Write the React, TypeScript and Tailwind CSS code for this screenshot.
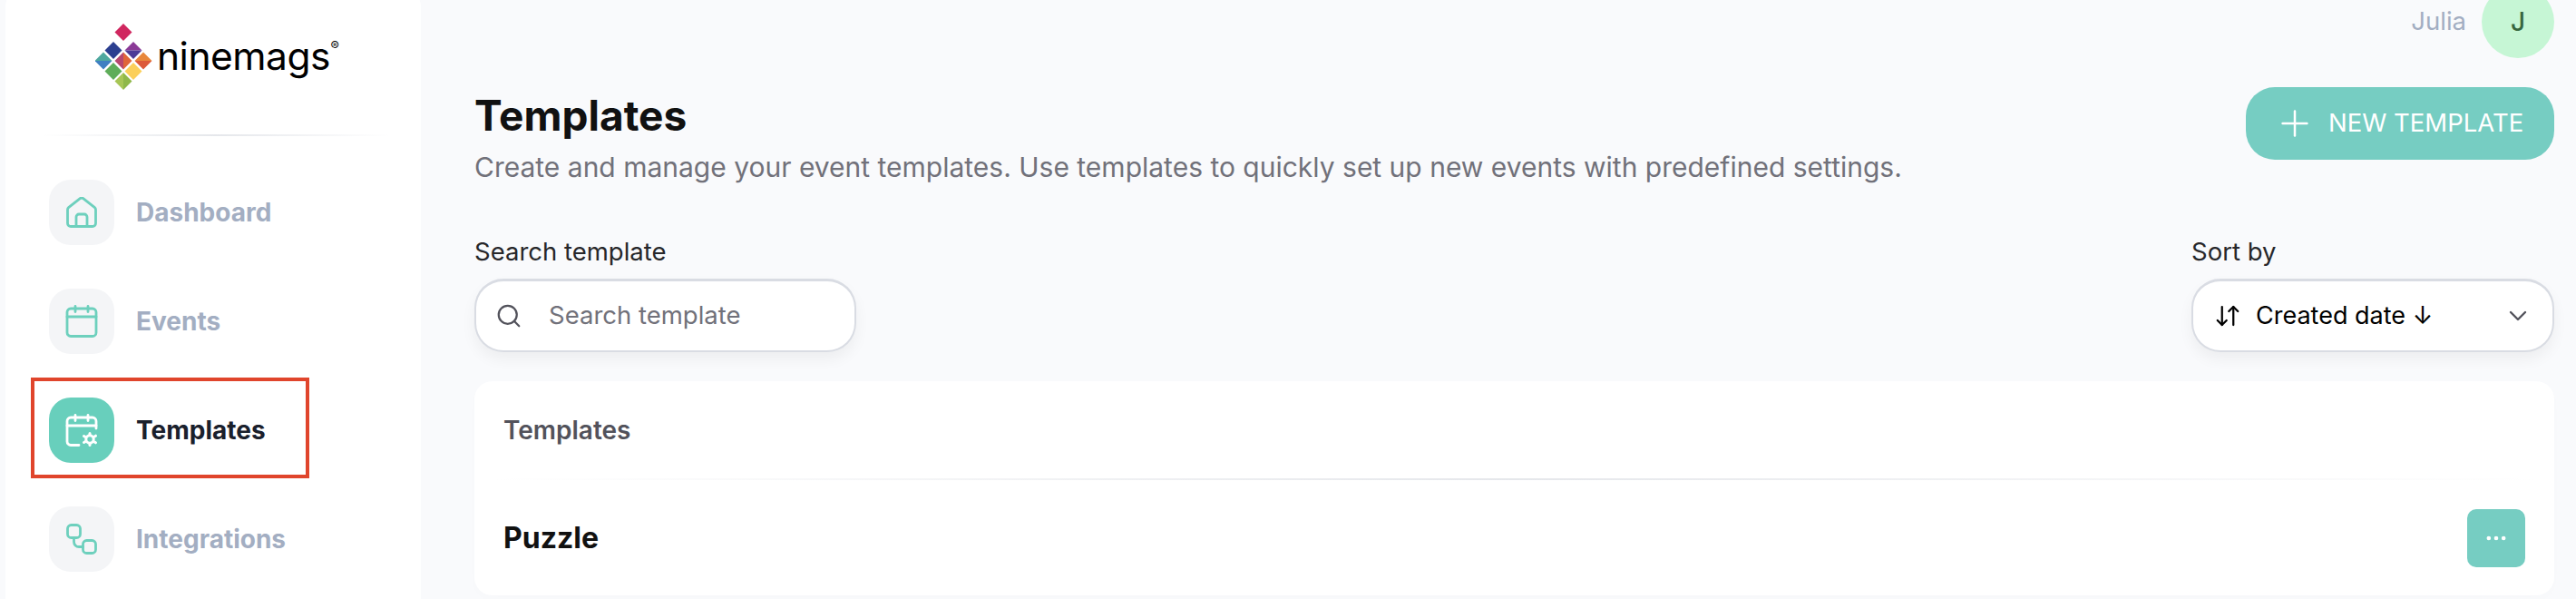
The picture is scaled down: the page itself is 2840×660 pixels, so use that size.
import { ArrowDownUp, ChevronDown, Ellipsis, Plus, Search } from "lucide-react";

const Logo = () => (
  <div className="flex items-start">
    <svg width="70" height="74" viewBox="0 0 70 74" className="shrink-0">
      {/* top */}
      <path d="M31 0l9.5 9.5L31 19l-9.5-9.5z" fill="#d0275f" />
      {/* upper pair */}
      <path d="M20 20l9.5 9.5L20 39l-9.5-9.5z" fill="#2c3f90" />
      <path d="M42 20l9.5 9.5H32.500z" fill="#8b3a97" />
      <path d="M51.500 29.500L42 39l-9.500-9.500z" fill="#4b3c98" />
      {/* middle row */}
      <path d="M9 31.500l9.500 9.500H-0.500z" fill="#4fa89f" />
      <path d="M18.500 41L9 50.500-0.500 41z" fill="#3f80c2" />
      <path d="M31 31.500V50.500L21.500 41z" fill="#b8476f" />
      <path d="M31 31.500L40.500 41 31 50.500z" fill="#e0663a" />
      <path d="M53 31.500l9.500 9.500H43.500z" fill="#e8873b" />
      <path d="M62.500 41L53 50.500 43.500 41z" fill="#dc5a3a" />
      {/* lower pair */}
      <path d="M20 43l9.500 9.500L20 62l-9.500-9.500z" fill="#5fad5a" />
      <path d="M42 43l9.500 9.500L42 62l-9.500-9.500z" fill="#fbcf5a" />
      {/* bottom */}
      <path d="M31 54v19l-9.500-9.500z" fill="#a7c656" />
      <path d="M31 54l9.500 9.500L31 73z" fill="#8fb84a" />
    </svg>
    <div className="relative -ml-[2px] mt-[9px] text-[42.5px] leading-[54px] tracking-[-0.5px] text-black [font-family:Inter,sans-serif]">
      ninemags
      <span className="absolute -right-[10px] top-[9px] text-[14px] leading-[14px] tracking-normal">®</span>
    </div>
  </div>
);

const HomeIcon = () => (
  <svg width="34" height="34" viewBox="0 0 34 34" fill="none" stroke="currentColor" strokeWidth="2.8" strokeLinejoin="round" strokeLinecap="round">
    <path d="M1.500 14a3 3 0 0 1 1.100-2.300L15 1.900a3.200 3.200 0 0 1 4 0l12.400 9.800a3 3 0 0 1 1.100 2.300V29a3.500 3.500 0 0 1-3.500 3.500H5A3.500 3.500 0 0 1 1.500 29z" />
    <path d="M11 32.500V22a3 3 0 0 1 3-3h6a3 3 0 0 1 3 3v10.500" />
  </svg>
);

const CalendarIcon = () => (
  <svg width="36" height="36" viewBox="0 0 36 36" fill="none" stroke="currentColor" strokeWidth="2.8" strokeLinecap="round">
    <rect x="2" y="4" width="32" height="30.500" rx="4" />
    <path d="M2 13h32M11 1.500v6M25 1.500v6" />
  </svg>
);

const CalendarCogIcon = () => (
  <svg width="36" height="36" viewBox="0 0 36 36" fill="none" stroke="currentColor" strokeWidth="2.8" strokeLinecap="round" className="overflow-visible">
    <path d="M15 34.500H6a4 4 0 0 1-4-4V8a4 4 0 0 1 4-4h24a4 4 0 0 1 4 4v8" />
    <path d="M2 13h32M11 1.500v6M25 1.500v6" />
    <circle cx="27" cy="28" r="4.200" strokeWidth="3" />
    <path d="M27 21.500v1.500M27 33v1.500M20.500 24.500l1.300.8M32.200 31l1.300.8M20.500 31.500l1.300-.8M32.200 25l1.300-.8" strokeWidth="3" />
  </svg>
);

const FlowIcon = () => (
  <svg width="34" height="34" viewBox="0 0 34 34" fill="none" stroke="currentColor" strokeWidth="2.8" strokeLinecap="round">
    <rect x="1.500" y="1.500" width="14" height="14" rx="4" />
    <rect x="18.500" y="18.500" width="14" height="14" rx="4" />
    <path d="M8.500 15.500V20a5.500 5.500 0 0 0 5.500 5.500h4.500" />
  </svg>
);

const navItems = [
  { label: "Dashboard", icon: <HomeIcon /> },
  { label: "Events", icon: <CalendarIcon /> },
  { label: "Templates", icon: <CalendarCogIcon />, active: true },
  { label: "Integrations", icon: <FlowIcon /> },
];

const Sidebar = () => (
  <aside className="-mt-4 ml-1.5 h-[700px] w-[458px] shrink-0 rounded-3xl bg-white">
    <div className="pl-[99px] pt-[42px]">
      <Logo />
    </div>
    <div className="ml-[39px] mt-[48px] h-[2px] w-[385px] bg-gradient-to-r from-transparent via-[#e5e7eb] to-transparent" />
    <nav className="mt-[48px] flex flex-col gap-12 pl-12">
      {navItems.map((item) => (
        <div key={item.label} className="relative flex items-center gap-6">
          <div
            className={
              item.active
                ? "flex h-[72px] w-[72px] items-center justify-center rounded-3xl bg-[#68cfbc] text-white"
                : "flex h-[72px] w-[72px] items-center justify-center rounded-3xl bg-[#f4f5f7] text-[#6dd0bd]"
            }
          >
            {item.icon}
          </div>
          <span className={item.active ? "text-[28px] font-bold text-[#1a202c]" : "text-[28px] font-bold text-[#a3aec2]"}>
            {item.label}
          </span>
          {item.active && (
            <div className="absolute -left-[20px] -top-[22px] h-[111px] w-[307px] border-4 border-[#e0452c]" />
          )}
        </div>
      ))}
    </nav>
  </aside>
);

const App = () => {
  return (
    <div className="flex h-[660px] w-[2840px] overflow-hidden bg-[#f9fafc] [font-family:Inter,sans-serif]">
      <Sidebar />
      <main className="flex-1 pl-[59px] pr-6">
        <div className="-mt-4 flex h-20 items-center justify-end gap-[17px]">
          <span className="text-[27.5px] text-[#a3aec2]">Julia</span>
          <div className="flex h-20 w-20 items-center justify-center rounded-full bg-[#c6f6d5] text-[28px] font-medium text-[#38663f]">
            J
          </div>
        </div>

        <div className="mt-8 flex items-start justify-between">
          <div className="pt-[3px]">
            <h1 className="text-[46px] font-bold leading-[56px] text-[#111]">Templates</h1>
            <p className="mt-[9px] text-[30px] leading-[40px] text-[#71717a]">
              Create and manage your event templates. Use templates to quickly set up new events with predefined settings.
            </p>
          </div>
          <button className="flex h-20 w-[340px] items-center gap-[14px] rounded-[32px] bg-[#76cdc2] pl-[31px] text-[27.5px] font-normal text-white">
            <Plus size={46} strokeWidth={1.3} />
            NEW TEMPLATE
          </button>
        </div>

        <div className="mt-14 flex items-start justify-between">
          <div>
            <label className="block text-[27.5px] leading-[34px] text-[#27272a]">Search template</label>
            <div className="mt-[13px] flex h-[81px] w-[421px] items-center gap-[29px] rounded-[32px] border-2 border-t-[3px] border-[#d9dce3] bg-white pl-[21px] shadow-[0_8px_16px_rgba(0,0,0,0.05)]">
              <Search size={30} strokeWidth={1.8} className="text-[#52525b]" />
              <span className="text-[27.5px] text-[#71717a]">Search template</span>
            </div>
          </div>
          <div>
            <label className="block text-[27.5px] leading-[34px] text-[#27272a]">Sort by</label>
            <div className="mt-[13px] flex h-[81px] w-[400px] items-center rounded-[32px] border-2 border-t-[3px] border-[#d9dce3] bg-white pl-[23px] pr-[22px] shadow-[0_8px_16px_rgba(0,0,0,0.05)]">
              <ArrowDownUp size={30} strokeWidth={1.8} className="text-black" />
              <span className="ml-4 text-[27px] text-black">Created date ↓</span>
              <ChevronDown size={32} strokeWidth={1.8} className="ml-auto text-[#52525b]" />
            </div>
          </div>
        </div>

        <section className="mt-8 h-[236px] rounded-[20px] bg-white shadow-[0_4px_12px_rgba(0,0,0,0.01)]">
          <div className="flex h-[107px] items-center pl-8 text-[28px] font-semibold text-[#52525b]">Templates</div>
          <div className="ml-5 mr-5 h-[2px] bg-gradient-to-r from-transparent via-[#e5e7eb] to-transparent" />
          <div className="flex h-[127px] items-center justify-between pl-8 pr-8">
            <span className="text-[32px] font-bold text-[#111]">Puzzle</span>
            <button className="flex h-16 w-16 items-center justify-center rounded-[10px] bg-[#76cdc2] text-white">
              <Ellipsis size={28} strokeWidth={2} />
            </button>
          </div>
        </section>
      </main>
    </div>
  );
};

export default App;
